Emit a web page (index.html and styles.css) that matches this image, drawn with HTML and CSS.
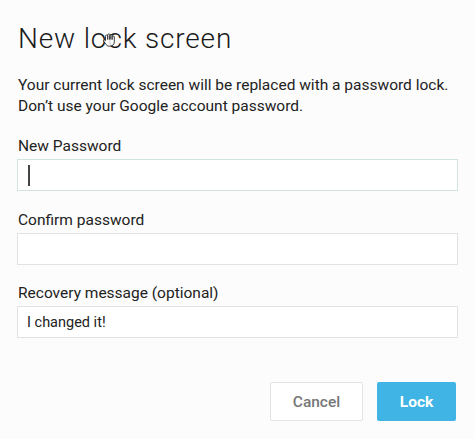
FILE: index.html
```html
<!DOCTYPE html>
<html>
<head>
<meta charset="utf-8">
<link rel="stylesheet" href="styles.css">
</head>
<body>
<div class="dialog">
  <div class="title-wrap">
    <h1 class="title">New lock screen</h1>
    <svg class="cursor" width="17" height="15" viewBox="0 0 17 15" aria-hidden="true">
      <path d="M3.5 8.5V4.2a1.1 1.1 0 0 1 2.2 0V7.5V3a1.1 1.1 0 0 1 2.2 0v4.5V3.6a1.1 1.1 0 0 1 2.2 0v4V5a1.1 1.1 0 0 1 2.2 0v4.8c0 2.6-1.8 4.4-4.2 4.4H7.3c-1.8 0-2.8-0.9-3.6-2.4L1.6 9.2a1 1 0 0 1 1.6-1.1z" fill="#fff" stroke="#1a1a1a" stroke-width="1" stroke-linejoin="round"/>
    </svg>
  </div>
  <p class="desc">Your current lock screen will be replaced with a password lock.<br>Don’t use your Google account password.</p>
  <div class="field first">
    <div class="label">New Password</div>
    <div class="input focused"><span class="caret"></span></div>
  </div>
  <div class="field">
    <div class="label">Confirm password</div>
    <div class="input"></div>
  </div>
  <div class="field">
    <div class="label">Recovery message (optional)</div>
    <div class="input"><span class="value">I changed it!</span></div>
  </div>
  <div class="actions">
    <div class="btn cancel">Cancel</div>
    <div class="btn lock">Lock</div>
  </div>
</div>
</body>
</html>
```
FILE: styles.css
```css
html, body {
  margin: 0;
  padding: 0;
  background: #fcfcfc;
}
body {
  width: 474px;
  height: 439px;
  overflow: hidden;
  font-family: Roboto, "Noto Sans", sans-serif;
  color: #222;
}
.dialog {
  padding: 23px 16px 0 18px;
}
.title-wrap {
  position: relative;
}
.title {
  margin: 0;
  font-size: 28px;
  line-height: 32px;
  font-weight: 300;
  letter-spacing: 0.85px;
  color: #1a1a1a;
}
.cursor {
  position: absolute;
  left: 84px;
  top: 9px;
  opacity: 0.85;
}
.desc {
  margin: 20px 0 0 0;
  font-size: 15.5px;
  line-height: 21px;
  color: #222;
}
.field {
  margin-top: 18.5px;
}
.field.first {
  margin-top: 19px;
}
.label {
  font-size: 15.5px;
  line-height: 20px;
  color: #222;
  margin-bottom: 3px;
}
.input {
  height: 30px;
  margin-left: -1px;
  border: 1px solid #e2e2e2;
  background: #ffffff;
  display: flex;
  align-items: center;
  padding-left: 9px;
}
.input.focused {
  border-color: #d0e5e0;
}
.caret {
  margin-left: 1px;
  width: 2px;
  height: 21px;
  background: #444;
}
.value {
  font-size: 14.5px;
  color: #222;
}
.actions {
  display: flex;
  justify-content: flex-end;
  gap: 14px;
  margin-top: 44px;
  padding-right: 2px;
}
.btn {
  height: 39px;
  box-sizing: border-box;
  display: flex;
  align-items: center;
  justify-content: center;
  font-size: 15.5px;
  border-radius: 2px;
}
.cancel {
  width: 93px;
  background: #fff;
  border: 1px solid #e3e3e3;
  color: #777;
  font-weight: 500;
}
.lock {
  width: 79px;
  background: #3fb4e5;
  color: #fff;
  font-weight: 700;
}
```
